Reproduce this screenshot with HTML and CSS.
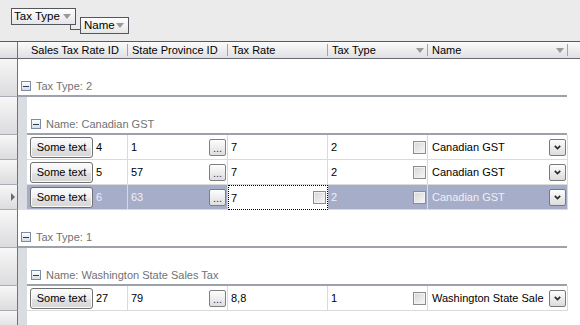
FILE: index.html
```html
<!DOCTYPE html>
<html lang="en">
<head>
    <meta charset="UTF-8">
    <title>Sales Tax Rates</title>
    <link rel="stylesheet" href="styles.css">
</head>
<body>
    <div class="group-panel">
        <div class="chip chip-first"><span>Tax Type</span><i class="sort-arrow"></i></div>
        <div class="chip-link"></div>
        <div class="chip chip-second"><span>Name</span><i class="sort-arrow"></i></div>
    </div>

    <div class="grid">
        <div class="row header-row">
            <div class="indicator"></div>
            <div class="hcell c1">Sales Tax Rate ID</div>
            <div class="hcell c2">State Province ID</div>
            <div class="hcell c3">Tax Rate</div>
            <div class="hcell c4"><span>Tax Type</span><i class="sort-arrow"></i></div>
            <div class="hcell c5"><span>Name</span><i class="sort-arrow"></i></div>
        </div>

        <!-- Tax Type: 2 -->
        <div class="row group-row">
            <div class="indicator"></div>
            <div class="group-head lvl1"><span class="expander"></span>Tax Type: 2</div>
        </div>
        <div class="row group-row">
            <div class="indicator"></div>
            <div class="indent"></div>
            <div class="group-head lvl2"><span class="expander"></span>Name: Canadian GST</div>
        </div>

        <div class="row data-row">
            <div class="indicator"></div>
            <div class="indent"></div>
            <div class="cell c1"><button class="btn">Some text</button>4</div>
            <div class="cell c2 split"><span>1</span><button class="ellipsis">...</button></div>
            <div class="cell c3">7</div>
            <div class="cell c4 split"><span>2</span><i class="check"></i></div>
            <div class="cell c5 split"><span>Canadian GST</span><button class="drop"><svg width="7" height="5" viewBox="0 0 7 5"><path d="M0.8 0.8 L3.5 3.6 L6.2 0.8" fill="none" stroke="#2b2b2b" stroke-width="1.7"/></svg></button></div>
        </div>
        <div class="row data-row">
            <div class="indicator"></div>
            <div class="indent"></div>
            <div class="cell c1"><button class="btn">Some text</button>5</div>
            <div class="cell c2 split"><span>57</span><button class="ellipsis">...</button></div>
            <div class="cell c3">7</div>
            <div class="cell c4 split"><span>2</span><i class="check"></i></div>
            <div class="cell c5 split"><span>Canadian GST</span><button class="drop"><svg width="7" height="5" viewBox="0 0 7 5"><path d="M0.8 0.8 L3.5 3.6 L6.2 0.8" fill="none" stroke="#2b2b2b" stroke-width="1.7"/></svg></button></div>
        </div>
        <div class="row data-row selected">
            <div class="indicator"><i class="current"></i></div>
            <div class="indent"></div>
            <div class="cell c1"><button class="btn">Some text</button>6</div>
            <div class="cell c2 split"><span>63</span><button class="ellipsis">...</button></div>
            <div class="cell c3 split focused"><span>7</span><i class="check"></i></div>
            <div class="cell c4 split"><span>2</span><i class="check"></i></div>
            <div class="cell c5 split"><span>Canadian GST</span><button class="drop"><svg width="7" height="5" viewBox="0 0 7 5"><path d="M0.8 0.8 L3.5 3.6 L6.2 0.8" fill="none" stroke="#2b2b2b" stroke-width="1.7"/></svg></button></div>
        </div>

        <!-- Tax Type: 1 -->
        <div class="row group-row">
            <div class="indicator"></div>
            <div class="group-head lvl1"><span class="expander"></span>Tax Type: 1</div>
        </div>
        <div class="row group-row">
            <div class="indicator"></div>
            <div class="indent"></div>
            <div class="group-head lvl2"><span class="expander"></span>Name: Washington State Sales Tax</div>
        </div>
        <div class="row data-row">
            <div class="indicator"></div>
            <div class="indent"></div>
            <div class="cell c1"><button class="btn">Some text</button>27</div>
            <div class="cell c2 split"><span>79</span><button class="ellipsis">...</button></div>
            <div class="cell c3">8,8</div>
            <div class="cell c4 split"><span>1</span><i class="check"></i></div>
            <div class="cell c5 split"><span>Washington State Sale</span><button class="drop"><svg width="7" height="5" viewBox="0 0 7 5"><path d="M0.8 0.8 L3.5 3.6 L6.2 0.8" fill="none" stroke="#2b2b2b" stroke-width="1.7"/></svg></button></div>
        </div>
        <div class="row filler-row">
            <div class="indicator"></div>
            <div class="indent"></div>
        </div>
    </div>
</body>
</html>
```

FILE: styles.css
```css
* {
    margin: 0;
    padding: 0;
    box-sizing: border-box;
}

body {
    font-family: 'Liberation Sans', Arial, sans-serif;
    font-size: 11px;
    color: #000;
    background: white;
    width: 580px;
    height: 325px;
    overflow: hidden;
}

/* group-by panel */
.group-panel {
    height: 41px;
    background: #ebebeb;
    display: flex;
    align-items: flex-start;
    padding: 8px 0 0 11px;
}

.chip {
    height: 17px;
    flex: none;
    display: flex;
    align-items: center;
    justify-content: space-between;
    padding: 0 4px 0 2px;
    border: 1px solid #53565d;
    background: linear-gradient(#fefefe, #e6e6e8);
    line-height: 13px;
    font-size: 11.5px;
}

.chip-first {
    width: 65px;
}

.chip-second {
    width: 49px;
    margin-top: 9px;
    padding-left: 3px;
}

.chip-link {
    width: 10px;
    height: 5px;
    flex: none;
    margin: 17px 0 0 -6px;
    border-left: 1px solid #53565d;
    border-bottom: 1px solid #53565d;
}

.sort-arrow {
    width: 0;
    height: 0;
    border-left: 4.5px solid transparent;
    border-right: 4.5px solid transparent;
    border-top: 5px solid #9a9a9a;
}

/* grid */
.row {
    display: flex;
}

.indicator {
    width: 18px;
    flex: none;
    background: linear-gradient(#f7f7f7, #dcdcdf);
    border-right: 1px solid #70737b;
    border-bottom: 1px solid #a9acb2;
    display: flex;
    align-items: center;
    padding-left: 11px;
}

.current {
    width: 0;
    height: 0;
    border-top: 4px solid transparent;
    border-bottom: 4px solid transparent;
    border-left: 4px solid #6b6b6b;
}

.indent {
    width: 9px;
    flex: none;
    background: #d9dce1;
}

.header-row {
    height: 18px;
    align-items: center;
    background: linear-gradient(#fbfbfb, #e0e0e3);
    border-top: 1px solid #575a63;
    border-bottom: 1px solid #676a72;
}

.header-row .indicator {
    align-self: stretch;
    border-bottom: none;
}

.hcell {
    height: 12px;
    flex: none;
    display: flex;
    align-items: center;
    justify-content: space-between;
    padding: 0 3px 0 4px;
    border-right: 1px solid #a5a5a5;
    line-height: 12px;
}

.c1 { width: 101px; }
.c2, .c3, .c4 { width: 100px; }
.c5 { width: 140px; }

.hcell.c1 {
    width: 110px;
    padding-left: 13px;
}

.group-row {
    height: 38px;
}

.group-head {
    display: flex;
    align-items: center;
    align-self: flex-end;
    gap: 5px;
    height: 18px;
    padding-bottom: 2px;
    border-bottom: 2px solid #9da2aa;
    color: #717274;
}

.group-head.lvl1 {
    width: 549px;
    padding-left: 3px;
}

.group-head.lvl2 {
    width: 540px;
    padding-left: 4px;
}

.expander {
    width: 10px;
    height: 10px;
    border: 1px solid #7c8ba6;
    background: linear-gradient(#ffffff, #d6dce7);
    display: flex;
    align-items: center;
    justify-content: center;
}

.expander::before {
    content: '';
    width: 6px;
    height: 1px;
    background: #2c3b5c;
}

.data-row {
    height: 25px;
}

.cell {
    height: 25px;
    flex: none;
    display: flex;
    align-items: center;
    gap: 3px;
    padding: 0 1px 0 3px;
    border-right: 1px solid #dadada;
    border-bottom: 1px solid #dadada;
}

.cell.c5 {
    padding-left: 4px;
}

.split {
    justify-content: space-between;
}

.btn {
    width: 63px;
    height: 21px;
    border: 1px solid #707070;
    border-radius: 3px;
    background: linear-gradient(#fdfdfd, #eeeeee 50%, #e2e2e2 51%, #d6d6d6);
    box-shadow: inset 0 0 0 1px #fbfbfb;
    font-family: inherit;
    font-size: 11px;
    color: #000;
}

.ellipsis {
    width: 17px;
    height: 17px;
    border: 1px solid #7f7f7f;
    border-radius: 2px;
    background: linear-gradient(#fdfdfd, #dedede);
    font-family: inherit;
    font-size: 11px;
    line-height: 11px;
    color: #3a2f66;
    padding-top: 2px;
}

.check {
    width: 13px;
    height: 13px;
    border: 1px solid #8c8c8c;
    background: linear-gradient(135deg, #d5d5d5, #f8f8f8);
    box-shadow: inset 0 0 0 1px #f2f2f2;
}

.drop {
    width: 17px;
    height: 17px;
    border: 1px solid #7a7a7a;
    border-radius: 2px;
    background: linear-gradient(#fdfdfd, #dcdcdc);
    display: flex;
    align-items: center;
    justify-content: center;
}

.selected .cell {
    background: #a6adc9;
    color: #eef0f6;
}

.selected .cell.focused {
    background: white;
    color: #000;
    border: 1px dotted #000;
    padding-left: 2px;
}

.filler-row {
    height: 20px;
}

.filler-row .indicator {
    border-bottom: none;
}
```
